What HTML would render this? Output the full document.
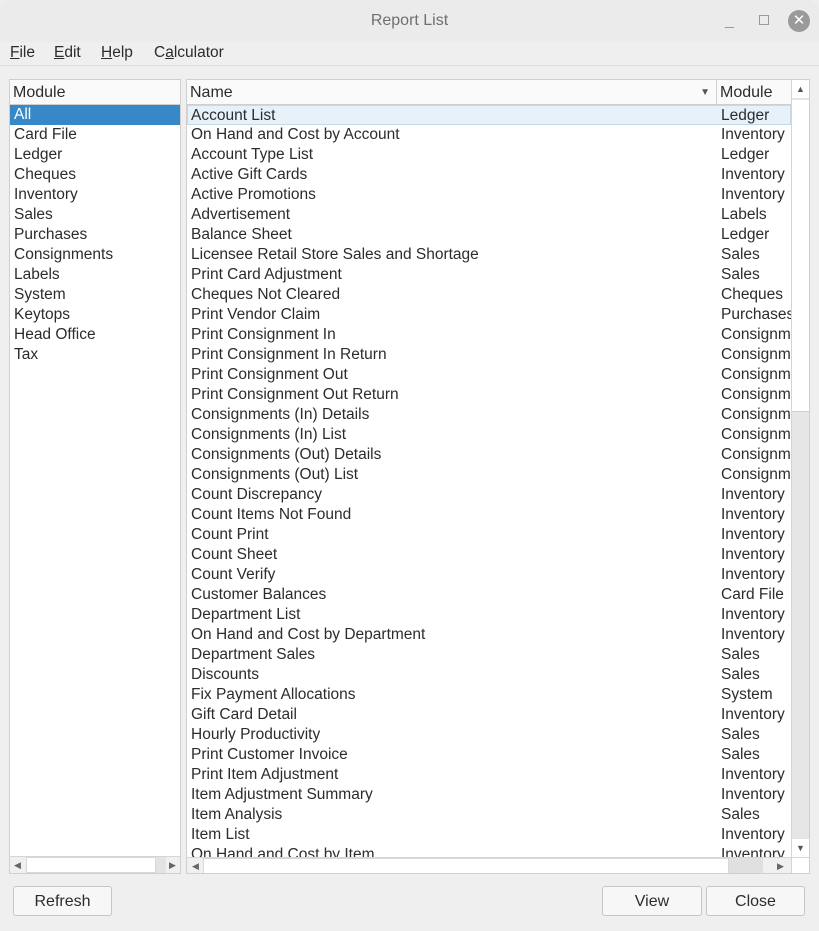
<!DOCTYPE html>
<html><head><meta charset="utf-8"><style>
*{margin:0;padding:0;box-sizing:border-box}
body{width:819px;height:931px;background:#efefef;font-family:"Liberation Sans","DejaVu Sans",sans-serif;font-size:15.5px;color:#2c2c2c;position:relative;overflow:hidden}
.title{position:absolute;left:0;top:0;width:819px;height:42px;background:#ebebeb;border-radius:10px 10px 0 0;text-align:center;line-height:42px;color:#707070;font-size:16px}
.menu{position:absolute;top:42px;left:0;width:819px;height:24px;border-bottom:1px solid #ddd;}
.menu span{position:absolute;top:2px}
.menu u{text-decoration:underline}
.panel{position:absolute;background:#fff;border:1px solid #cfcfcf}
.hdr{position:absolute;height:25px;line-height:26px;background:#fff;border-bottom:1px solid #cfcfcf;padding-left:3px;font-size:16px}
.row{height:20px;line-height:20px;padding-left:4px;white-space:nowrap;position:relative}
.sel{background:#3689c6;color:#fff}
.r .m{position:absolute;left:534px;top:0;white-space:nowrap}
.btn{position:absolute;top:886px;height:30px;background:#f7f7f7;border:1px solid #c6c6c6;border-radius:3px;text-align:center;line-height:30px;font-size:16px}
</style></head><body>
<div class="title">Report List
<span style="position:absolute;left:725px;top:0;color:#999">_</span>
<span style="position:absolute;left:759px;top:15px;width:10px;height:10px;border:1px solid #999"></span>
<span style="position:absolute;left:788px;top:10px;width:22px;height:22px;border-radius:50%;background:#9a9a9a;color:#fff;line-height:22px;font-size:15px;font-weight:bold">✕</span>
</div>
<div class="menu"><span style="left:10px"><u>F</u>ile</span><span style="left:54px"><u>E</u>dit</span><span style="left:101px"><u>H</u>elp</span><span style="left:154px">C<u>a</u>lculator</span></div>

<div class="panel" style="left:9px;top:79px;width:172px;height:795px">
<div class="hdr" style="left:0;top:0;width:170px;background:#fafafa">Module</div>
<div style="position:absolute;top:25px;left:0;width:170px">
<div class="row sel">All</div><div class="row">Card File</div><div class="row">Ledger</div><div class="row">Cheques</div><div class="row">Inventory</div><div class="row">Sales</div><div class="row">Purchases</div><div class="row">Consignments</div><div class="row">Labels</div><div class="row">System</div><div class="row">Keytops</div><div class="row">Head Office</div><div class="row">Tax</div>
</div>
<div style="position:absolute;left:0;top:776px;width:170px;height:17px;background:#f0f0f0;border-top:1px solid #d5d5d5">
<span style="position:absolute;left:4px;top:0;font-size:9px;color:#666;line-height:17px">◀</span>
<span style="position:absolute;left:16px;top:0;width:130px;height:16px;background:#fff;border:1px solid #d8d8d8"></span>
<span style="position:absolute;left:146px;top:0;width:10px;height:16px;background:#e3e3e3"></span>
<span style="position:absolute;left:159px;top:0;font-size:9px;color:#666;line-height:17px">▶</span>
</div>
</div>

<div class="panel" style="left:186px;top:79px;width:624px;height:795px;overflow:hidden">
<div class="hdr" style="left:0;top:0;width:530px;border-right:1px solid #cfcfcf;background:#fafafa">Name<span style="position:absolute;right:6px;font-size:10px;color:#555">▼</span></div>
<div class="hdr" style="left:530px;top:0;width:74px;background:#fafafa">Module</div>
<div class="r" style="position:absolute;top:25px;left:0;width:604px;height:752px;overflow:hidden">
<div class="row" style="background:#e6f1fa;border:1px solid #c5d9e8;line-height:19px;padding-left:3px"><span>Account List</span><span class="m" style="left:533px">Ledger</span></div>
<div class="row">On Hand and Cost by Account<span class="m">Inventory</span></div>
<div class="row">Account Type List<span class="m">Ledger</span></div>
<div class="row">Active Gift Cards<span class="m">Inventory</span></div>
<div class="row">Active Promotions<span class="m">Inventory</span></div>
<div class="row">Advertisement<span class="m">Labels</span></div>
<div class="row">Balance Sheet<span class="m">Ledger</span></div>
<div class="row">Licensee Retail Store Sales and Shortage<span class="m">Sales</span></div>
<div class="row">Print Card Adjustment<span class="m">Sales</span></div>
<div class="row">Cheques Not Cleared<span class="m">Cheques</span></div>
<div class="row">Print Vendor Claim<span class="m">Purchases</span></div>
<div class="row">Print Consignment In<span class="m">Consignm</span></div>
<div class="row">Print Consignment In Return<span class="m">Consignm</span></div>
<div class="row">Print Consignment Out<span class="m">Consignm</span></div>
<div class="row">Print Consignment Out Return<span class="m">Consignm</span></div>
<div class="row">Consignments (In) Details<span class="m">Consignm</span></div>
<div class="row">Consignments (In) List<span class="m">Consignm</span></div>
<div class="row">Consignments (Out) Details<span class="m">Consignm</span></div>
<div class="row">Consignments (Out) List<span class="m">Consignm</span></div>
<div class="row">Count Discrepancy<span class="m">Inventory</span></div>
<div class="row">Count Items Not Found<span class="m">Inventory</span></div>
<div class="row">Count Print<span class="m">Inventory</span></div>
<div class="row">Count Sheet<span class="m">Inventory</span></div>
<div class="row">Count Verify<span class="m">Inventory</span></div>
<div class="row">Customer Balances<span class="m">Card File</span></div>
<div class="row">Department List<span class="m">Inventory</span></div>
<div class="row">On Hand and Cost by Department<span class="m">Inventory</span></div>
<div class="row">Department Sales<span class="m">Sales</span></div>
<div class="row">Discounts<span class="m">Sales</span></div>
<div class="row">Fix Payment Allocations<span class="m">System</span></div>
<div class="row">Gift Card Detail<span class="m">Inventory</span></div>
<div class="row">Hourly Productivity<span class="m">Sales</span></div>
<div class="row">Print Customer Invoice<span class="m">Sales</span></div>
<div class="row">Print Item Adjustment<span class="m">Inventory</span></div>
<div class="row">Item Adjustment Summary<span class="m">Inventory</span></div>
<div class="row">Item Analysis<span class="m">Sales</span></div>
<div class="row">Item List<span class="m">Inventory</span></div>
<div class="row">On Hand and Cost by Item<span class="m">Inventory</span></div>
</div>
<div style="position:absolute;left:604px;top:0;width:18px;height:777px;background:#e6e6e6;border-left:1px solid #d5d5d5">
<div style="position:absolute;top:0;left:0;width:17px;height:18px;background:#fff;font-size:9px;text-align:center;line-height:18px;color:#555">▲</div>
<div style="position:absolute;top:20px;left:0;width:17px;height:312px;background:#fff;border-bottom:1px solid #d0d0d0"></div>
<div style="position:absolute;top:759px;left:0;width:17px;height:18px;background:#fff;font-size:9px;text-align:center;line-height:18px;color:#555">▼</div>
</div>
<div style="position:absolute;left:0;top:777px;width:622px;height:17px;background:#f0f0f0;border-top:1px solid #d5d5d5">
<span style="position:absolute;left:5px;font-size:9px;color:#666;line-height:16px">◀</span>
<span style="position:absolute;left:16px;top:0;width:526px;height:16px;background:#fff;border:1px solid #d8d8d8"></span>
<span style="position:absolute;left:542px;top:0;width:34px;height:16px;background:#e0e0e0"></span>
<span style="position:absolute;left:590px;font-size:9px;color:#666;line-height:16px">▶</span>
<span style="position:absolute;left:604px;top:0;width:18px;height:17px;background:#fff;border-left:1px solid #d5d5d5"></span>
</div>
</div>

<div class="btn" style="left:13px;width:99px">Refresh</div>
<div class="btn" style="left:602px;width:100px">View</div>
<div class="btn" style="left:706px;width:99px">Close</div>
</body></html>
